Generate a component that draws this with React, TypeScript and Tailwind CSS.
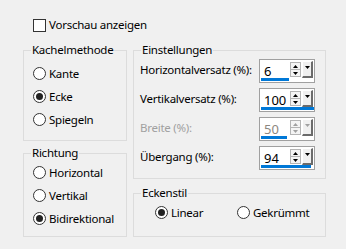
import type { ReactNode } from 'react';

function Group({ title, className, inner, children }: { title: string; className: string; inner: string; children: ReactNode }) {
  return (
    <fieldset className={`border border-[#dcdcdc] ${className}`}>
      <legend className="ml-[7px] px-[1px] leading-[16px]">{title}</legend>
      <div className={inner}>{children}</div>
    </fieldset>
  );
}

function Radio({ label, checked }: { label: string; checked?: boolean }) {
  return (
    <div className="flex items-center h-[23px]">
      <span className="w-[13px] h-[13px] rounded-full border border-[#333] bg-white flex items-center justify-center">
        {checked && <span className="w-[7px] h-[7px] rounded-full bg-[#222]" />}
      </span>
      <span className="ml-[3px] leading-[16px]">{label}</span>
    </div>
  );
}

function Arrow({ up, color }: { up?: boolean; color: string }) {
  return (
    <svg width="5" height="3" viewBox="0 0 5 3" className="block">
      <path d={up ? 'M0 3 L2.5 0 L5 3 Z' : 'M0 0 L5 0 L2.5 3 Z'} fill={color} />
    </svg>
  );
}

function Spin({ value, bar, disabled }: { value: string; bar: string; disabled?: boolean }) {
  const arrow = disabled ? '#a0a0a0' : '#000';
  return (
    <div className="w-[56px] h-[24px] border border-[#a0a0a0] bg-white flex flex-col">
      <div className="flex h-[18px]">
        <div className={`flex-1 pl-[4px] pt-[4px] text-[13px] leading-[14px] tracking-normal ${disabled ? 'text-[#8c8780]' : 'text-black'}`}>
          {value}
        </div>
        <div className="flex flex-col w-[11px] pt-[2px]">
          <div className="h-[8px] border border-[#b4b4b4] bg-[#f4f4f4] flex items-center justify-center">
            <Arrow up color={arrow} />
          </div>
          <div className="h-[7px] border border-t-0 border-[#b4b4b4] bg-[#f4f4f4] flex items-center justify-center">
            <Arrow color={arrow} />
          </div>
        </div>
        <div className="ml-[1px] mt-[1px] w-[11px] h-[17px] bg-[#f0f0f0] border-t border-l border-t-white border-l-white border-r-2 border-b-2 border-r-[#6b6b6b] border-b-[#6b6b6b] flex justify-center pt-[4px]">
          <Arrow color={arrow} />
        </div>
        <div className="w-[1px]" />
      </div>
      <div className="mt-auto mb-[1px] ml-[1px] h-[3px] bg-[#0078d7]" style={{ width: bar }} />
    </div>
  );
}

function Row({ label, children, disabled }: { label: string; children: ReactNode; disabled?: boolean }) {
  return (
    <div className="flex items-center justify-between h-[24px]">
      <span className={`leading-[16px] pb-[3px] whitespace-nowrap ${disabled ? 'text-[#a0a0a0]' : ''}`}>{label}</span>
      {children}
    </div>
  );
}

export default function App() {
  return (
    <div className="w-[346px] h-[249px] bg-[#f0f0f0] text-black text-[11.5px] tracking-[-0.25px] font-['Noto_Sans',sans-serif] pt-[17px] pl-[23px]">
      <div className="flex items-center h-[16px] pl-[10px]">
        <span className="w-[13px] h-[13px] border border-[#333] bg-white" />
        <span className="ml-[3px] leading-[16px]">Vorschau anzeigen</span>
      </div>

      <div className="flex gap-[6px] mt-[9px]">
        <div className="flex flex-col w-[104px]">
          <Group title="Kachelmethode" className="h-[99px]" inner="pl-[9px] pt-[4px]">
            <Radio label="Kante" />
            <Radio label="Ecke" checked />
            <Radio label="Spiegeln" />
          </Group>
          <Group title="Richtung" className="h-[92px] mt-[4px]" inner="pl-[9px]">
            <Radio label="Horizontal" />
            <Radio label="Vertikal" />
            <Radio label="Bidirektional" checked />
          </Group>
        </div>

        <div className="flex flex-col w-[193px]">
          <Group title="Einstellungen" className="h-[137px]" inner="flex flex-col gap-[5px] pt-[1px] pl-[6px] pr-[10px]">
            <Row label="Horizontalversatz (%):">
              <Spin value="6" bar="28px" />
            </Row>
            <Row label="Vertikalversatz (%):">
              <Spin value="100" bar="53px" />
            </Row>
            <Row label="Breite (%):" disabled>
              <Spin value="50" bar="26px" disabled />
            </Row>
            <Row label="Übergang (%):">
              <Spin value="94" bar="50px" />
            </Row>
          </Group>
          <Group title="Eckenstil" className="h-[52px] mt-[6px]" inner="grid grid-cols-[82px_auto] pl-[21px]">
            <Radio label="Linear" checked />
            <Radio label="Gekrümmt" />
          </Group>
        </div>
      </div>
    </div>
  );
}
